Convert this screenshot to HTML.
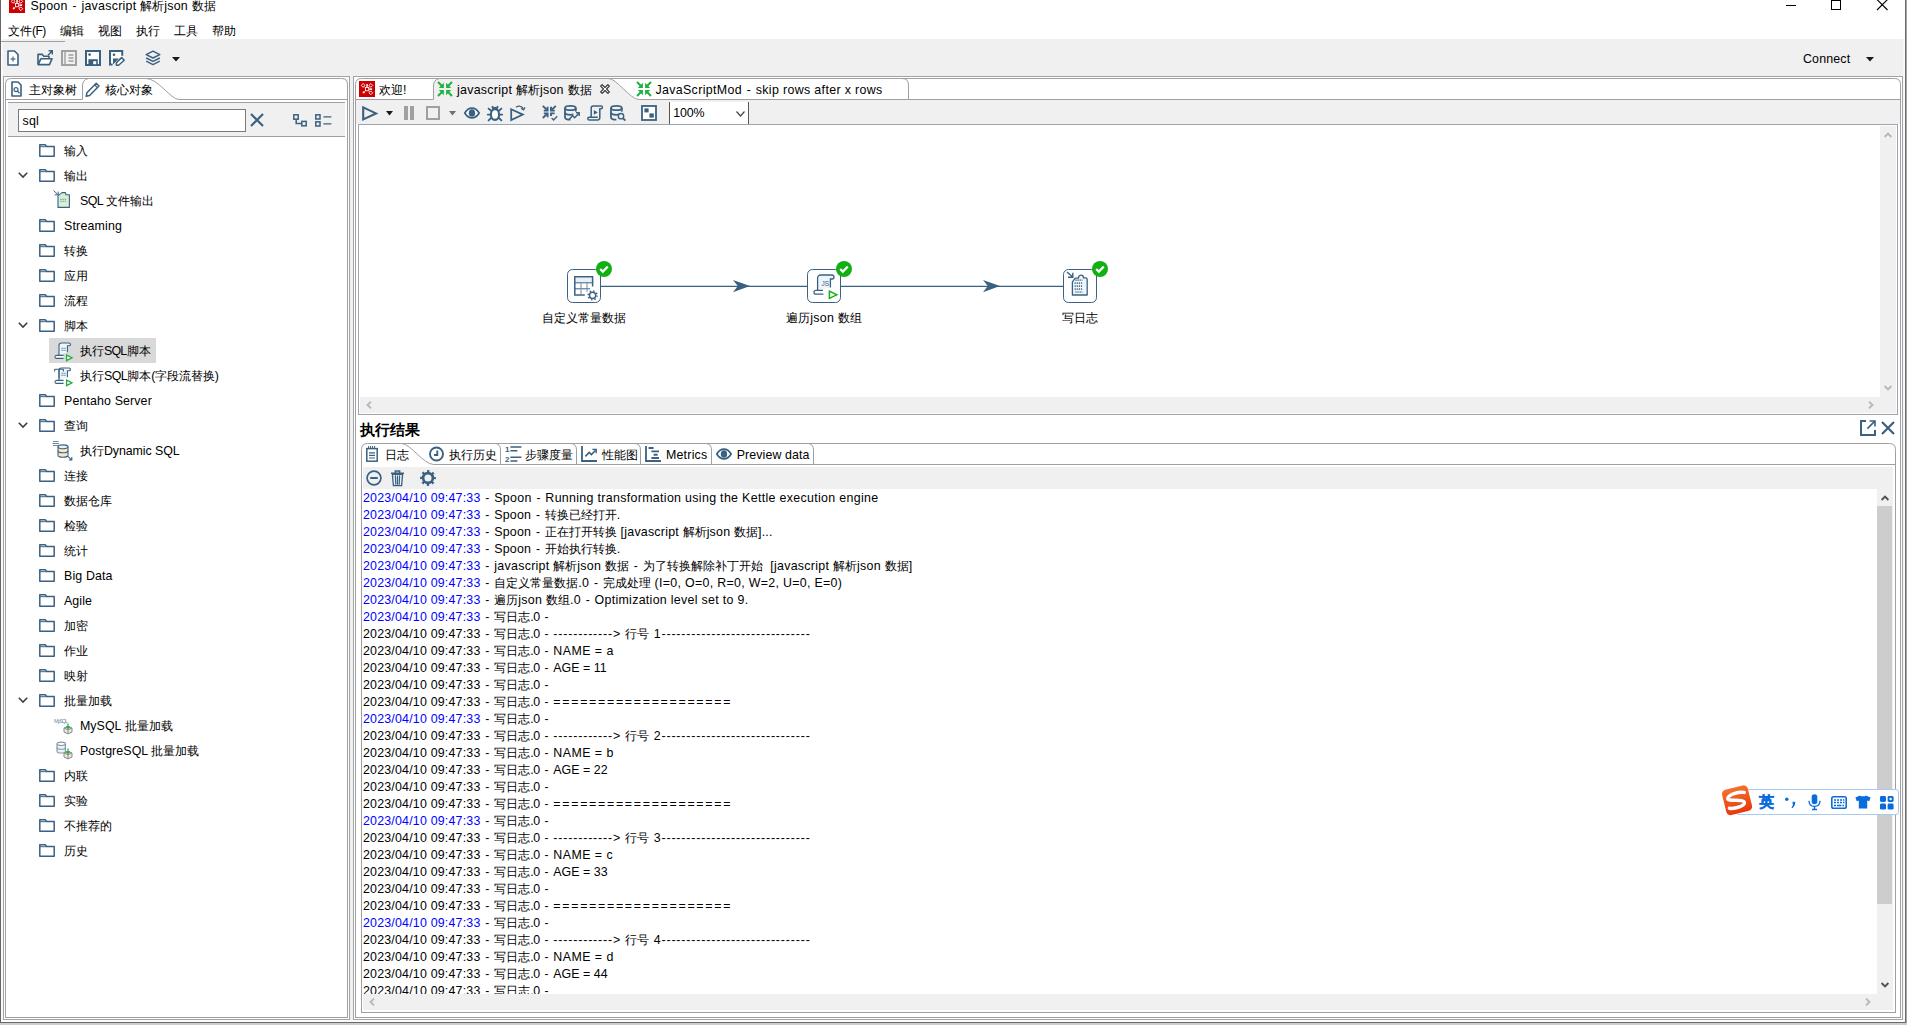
<!DOCTYPE html><html><head><meta charset="utf-8"><title>Spoon</title><style>
html,body{margin:0;padding:0}
body{width:1907px;height:1025px;position:relative;overflow:hidden;background:#f0f0f0;
 font-family:"Liberation Sans",sans-serif;font-size:12px;color:#000}
.a{position:absolute;box-sizing:border-box}
svg.a{overflow:visible}
.t{position:absolute;white-space:pre;font-size:12px}
.t i,.ll i{font-style:normal;font-size:12.4px;letter-spacing:.18px}
.t b,.ll b{font-weight:normal}
.ll{position:absolute;left:363px;white-space:pre;height:17px;line-height:17px;font-size:12px}

.bold b{font-weight:bold}
.t s,.ll s{display:inline-block;width:13.7px;text-align:center;text-decoration:none}
</style></head><body><div class="a" style="left:1px;top:0px;width:1904px;height:39px;background:#fff"></div><div class="a" style="left:1px;top:39px;width:1px;height:983px;background:#fcfcfc"></div><div class="a" style="left:2px;top:39px;width:1px;height:983px;background:#f7f7f7"></div><div class="a" style="left:1903px;top:39px;width:1px;height:983px;background:#f6f6f6"></div><div class="a" style="left:1904px;top:39px;width:1px;height:983px;background:#fcfcfc"></div><div class="a" style="left:1px;top:1020px;width:1904px;height:2px;background:#fbfbfb"></div><div class="a" style="left:0px;top:0px;width:1px;height:1023px;background:#666"></div><div class="a" style="left:1905px;top:0px;width:1px;height:1023px;background:#6a6a6a"></div><div class="a" style="left:1906px;top:0px;width:1px;height:1025px;background:#a8a8a8"></div><div class="a" style="left:0px;top:1022px;width:1906px;height:1px;background:#6a6a6a"></div><div class="a" style="left:0px;top:1023px;width:1907px;height:2px;background:#cdcdcd"></div><svg class="a" style="left:9px;top:-3px" width="16" height="16" viewBox="0 0 16 16" ><rect width="16" height="16" fill="#cc0000"/><g fill="none" stroke="#fff" stroke-opacity=".88" stroke-width="1"><rect x="6.5" y="6.5" width="3.2" height="3.2"/><path d="M4.1 2.5000000000000004l1.9 1.9-1.9 1.9-1.9-1.9zM11.8 2.5000000000000004l1.9 1.9-1.9 1.9-1.9-1.9zM11.8 9.9l1.9 1.9-1.9 1.9-1.9-1.9z"/><path d="M6.5 6.5L5.3 5.6M9.7 6.5l1-.9M9.7 9.7l1 1M6.5 9.7L5.5 10.6" stroke-opacity=".7"/></g><g fill="#fff" fill-opacity=".92"><rect x="7.2" y="3.1" width="1.7" height="2.7"/><rect x="10.3" y="7.3" width="2.8" height="1.7"/><circle cx="4.8" cy="11.3" r="1.15"/></g></svg><div class="t " style="left:30.5px;top:-3px;line-height:18px;height:18px;"><i style="letter-spacing:0.272px;">Spoon</i><s>-</s><i style="letter-spacing:0.272px;">javascript </i><b>解析</b><i style="letter-spacing:0.272px;">json </i><b>数据</b></div><div class="a" style="left:1786px;top:5px;width:10px;height:1px;background:#000"></div><div class="a" style="left:1831px;top:0px;width:10px;height:10px;border:1px solid #000"></div><svg class="a" style="left:1877px;top:0px" width="11" height="11" viewBox="0 0 11 11" ><path d="M0 -.5l10.5 10.5M10.5 -.5L0 10" stroke="#000" stroke-width="1.1" fill="none"/></svg><div class="t " style="left:8px;top:22px;line-height:18px;height:18px;"><b>文件</b><i style="letter-spacing:-0.545px;font-size:12px;">(F)</i></div><div class="t " style="left:60px;top:22px;line-height:18px;height:18px;"><b>编辑</b></div><div class="t " style="left:98px;top:22px;line-height:18px;height:18px;"><b>视图</b></div><div class="t " style="left:136px;top:22px;line-height:18px;height:18px;"><b>执行</b></div><div class="t " style="left:174.3px;top:22px;line-height:18px;height:18px;"><b>工具</b></div><div class="t " style="left:212px;top:22px;line-height:18px;height:18px;"><b>帮助</b></div><div class="a" style="left:1px;top:41px;width:64px;height:1px;background:#a0a0a0"></div><svg class="a" style="left:7px;top:50px" width="12" height="16" viewBox="0 0 12 16" ><path d="M1 1h6.5l3.5 3.5V15H1z" fill="#fff" stroke="#3a6181" stroke-width="1.6" stroke-linejoin="round"/><path d="M6 6.6v4.8M3.6 9h4.8" stroke="#557a97" stroke-width="1.4"/></svg><svg class="a" style="left:37px;top:50px" width="16" height="16" viewBox="0 0 16 16" ><path d="M1 14.6V4.4h4.2l1.6 1.8h5.2v2.4" fill="none" stroke="#3a6181" stroke-width="1.6" stroke-linejoin="round"/><path d="M1.2 14.6l2.6-5.8h11.2l-2.6 5.8z" fill="#fff" stroke="#3a6181" stroke-width="1.6" stroke-linejoin="round"/><path d="M11 5.2L15.2.9M11.6.8h3.7v3.7" fill="none" stroke="#3a6181" stroke-width="1.4"/></svg><svg class="a" style="left:61px;top:50px" width="16" height="16" viewBox="0 0 16 16" ><rect x="1" y="1" width="14" height="14" fill="#f0f0f0" stroke="#a0a0a0" stroke-width="2"/><path d="M4 1v14" stroke="#a0a0a0" stroke-width="1.4"/><path d="M7.5 5h5M7.5 8h5M7.5 11h5" stroke="#a0a0a0" stroke-width="1.5"/></svg><svg class="a" style="left:85px;top:50px" width="16" height="16" viewBox="0 0 16 16" ><rect x="1" y="1" width="14" height="14" fill="#fff" stroke="#3a6181" stroke-width="2"/><rect x="3.4" y="9.2" width="9.4" height="5.8" fill="#3a6181"/><rect x="8.2" y="11.2" width="3" height="3" fill="#fff"/><circle cx="4.6" cy="4.6" r="1.3" fill="#3a6181"/></svg><svg class="a" style="left:109px;top:50px" width="16" height="16" viewBox="0 0 16 16" ><path d="M13.2 5.8V1H1v13.6h2.6" fill="#fff" stroke="#3a6181" stroke-width="2"/><path d="M4 8.6h6L4 14.4z" fill="#3a6181"/><circle cx="5" cy="4.8" r="1.3" fill="#3a6181"/><path d="M12.6 7.6l2.6 2.6-5.6 5H7.4v-2.4z" fill="#fff" stroke="#3a6181" stroke-width="1.5" stroke-linejoin="round"/></svg><svg class="a" style="left:145px;top:50px" width="16" height="16" viewBox="0 0 16 16" ><g fill="none" stroke="#3a6181" stroke-width="1.5" stroke-linejoin="round"><path d="M8 1.2l6.8 3.4L8 8 1.2 4.6z" fill="#f0f0f0"/><path d="M1.2 8L8 11.4 14.8 8"/><path d="M1.2 11.2L8 14.6l6.8-3.4"/></g></svg><svg class="a" style="left:172px;top:57px" width="8" height="5" viewBox="0 0 8 5" ><path d="M0 0h8l-4 4.5z" fill="#1a1a1a"/></svg><div class="t " style="left:1803px;top:51px;line-height:17px;height:17px;"><i style="letter-spacing:0.163px;">Connect</i></div><svg class="a" style="left:1866px;top:57px" width="8" height="5" viewBox="0 0 8 5" ><path d="M0 0h8l-4 4.5z" fill="#1a1a1a"/></svg><div class="a" style="left:3px;top:76px;width:347px;height:944px;border:1px solid #a0a3ab;background:#fff"></div><div class="a" style="left:5px;top:78px;width:7px;height:7px;background:#f0f0f0"></div><div class="a" style="left:341px;top:78px;width:7px;height:7px;background:#f0f0f0"></div><svg class="a" style="left:5px;top:78px" width="343" height="22" viewBox="0 0 343 22" ><path d="M.5 22V6.5Q.5 .5 6.5 .5H336.5Q342.5 .5 342.5 6.5V22z" fill="#fff" stroke="none"/><path d="M.5 22V6.5Q.5 .5 6.5 .5H336.5Q342.5 .5 342.5 6.5V22" fill="none" stroke="#a0a0a0"/><path d="M.5 21.5H77.5V8Q77.5 1.5 83.5 .5 M141 .5C153.2 .5 165.7 21.5 174 21.5H342.5" fill="none" stroke="#a0a0a0"/></svg><div class="a" style="left:5px;top:100px;width:343px;height:918px;border:1px solid #a0a0a0;border-top:0"></div><svg class="a" style="left:11px;top:81px" width="12" height="16" viewBox="0 0 12 16" ><path d="M1 1h6l3 3V15H1z" fill="#fff" stroke="#3a6181" stroke-width="1.6" stroke-linejoin="round"/><circle cx="5" cy="8.6" r="2" fill="none" stroke="#3a6181" stroke-width="1.2"/><path d="M6.5 10.2l2 2" stroke="#3a6181" stroke-width="1.3"/></svg><div class="t " style="left:28.5px;top:81px;line-height:18px;height:18px;"><b>主对象树</b></div><svg class="a" style="left:84.8px;top:82px" width="15" height="15" viewBox="0 0 15 15" ><path d="M11.2 1.2l2.8 2.8-9.4 9.6-3.4.7.7-3.5z" fill="#fff" stroke="#3a6181" stroke-width="1.5" stroke-linejoin="round"/><path d="M9.6 2.9l2.8 2.8" stroke="#3a6181" stroke-width="1.2"/></svg><div class="t " style="left:105px;top:81px;line-height:18px;height:18px;"><b>核心对象</b></div><div class="a" style="left:8px;top:102px;width:337px;height:35px;background:#f0f0f0;border-top:1px solid #a0a0a0;border-bottom:1px solid #a0a0a0"></div><div class="a" style="left:18px;top:109px;width:228px;height:23px;background:#fff;border:1px solid #7a7a7a"></div><div class="t " style="left:22.5px;top:113px;line-height:17px;height:17px;"><i>sql</i></div><svg class="a" style="left:250px;top:113px" width="14" height="14" viewBox="0 0 14 14" ><path d="M1 1l12 12M13 1L1 13" stroke="#3a6181" stroke-width="2.2"/></svg><svg class="a" style="left:293px;top:114px" width="14" height="13" viewBox="0 0 14 13" ><g fill="#f0f0f0" stroke="#3a6181" stroke-width="1.5"><path d="M3.2 5v4.6h5" fill="none"/><rect x=".8" y=".8" width="4.4" height="4.4"/><rect x="8.8" y="7.4" width="4.4" height="4.4"/></g></svg><svg class="a" style="left:315px;top:114px" width="17" height="13" viewBox="0 0 17 13" ><g fill="#f0f0f0" stroke="#3a6181" stroke-width="1.5"><rect x=".8" y=".8" width="4.2" height="4.2"/><rect x=".8" y="7.8" width="4.2" height="4.2"/><path d="M8.4 2.9h8M8.4 9.9h8" stroke-width="1.3"/></g></svg><svg class="a" style="left:39px;top:144px" width="16" height="13" viewBox="0 0 16 13" ><path d="M.8 12.2V.8h5.4l1.6 1.8h7.4v9.6z" fill="#fff" stroke="#3a6181" stroke-width="1.5" stroke-linejoin="round"/><path d="M1 2.7h6.6" stroke="#3a6181" stroke-width="1"/></svg><div class="t " style="left:64px;top:142px;line-height:19px;height:19px;"><b>输入</b></div><svg class="a" style="left:17.5px;top:172px" width="10" height="6" viewBox="0 0 10 6" ><path d="M.8 .8L5 5 9.2 .8" fill="none" stroke="#404040" stroke-width="1.6"/></svg><svg class="a" style="left:39px;top:169px" width="16" height="13" viewBox="0 0 16 13" ><path d="M.8 12.2V.8h5.4l1.6 1.8h7.4v9.6z" fill="#fff" stroke="#3a6181" stroke-width="1.5" stroke-linejoin="round"/><path d="M1 2.7h6.6" stroke="#3a6181" stroke-width="1"/></svg><div class="t " style="left:64px;top:167px;line-height:19px;height:19px;"><b>输出</b></div><svg class="a" style="left:53px;top:190px" width="17" height="18" viewBox="0 0 17 18" ><path d="M.6 .6l4.2 3.8M1.6 4.8h3.6V1.6" fill="none" stroke="#3a6181" stroke-width="1"/><path d="M5 17.4V5.6L9 2.6h3.4l.6 2.2h3.4V17.4z" fill="#d8efd4" stroke="#3a6181" stroke-width="1.1" stroke-linejoin="round"/><path d="M7.2 9.4h6.4M7.2 11.4h6.4" stroke="#8fa9b8" stroke-width="1.1" stroke-dasharray="1.5 .7"/></svg><div class="t " style="left:80px;top:192px;line-height:19px;height:19px;"><i style="letter-spacing:-0.57px;">SQL </i><b>文件输出</b></div><svg class="a" style="left:39px;top:219px" width="16" height="13" viewBox="0 0 16 13" ><path d="M.8 12.2V.8h5.4l1.6 1.8h7.4v9.6z" fill="#fff" stroke="#3a6181" stroke-width="1.5" stroke-linejoin="round"/><path d="M1 2.7h6.6" stroke="#3a6181" stroke-width="1"/></svg><div class="t " style="left:64px;top:217px;line-height:19px;height:19px;"><i style="letter-spacing:0.192px;">Streaming</i></div><svg class="a" style="left:39px;top:244px" width="16" height="13" viewBox="0 0 16 13" ><path d="M.8 12.2V.8h5.4l1.6 1.8h7.4v9.6z" fill="#fff" stroke="#3a6181" stroke-width="1.5" stroke-linejoin="round"/><path d="M1 2.7h6.6" stroke="#3a6181" stroke-width="1"/></svg><div class="t " style="left:64px;top:242px;line-height:19px;height:19px;"><b>转换</b></div><svg class="a" style="left:39px;top:269px" width="16" height="13" viewBox="0 0 16 13" ><path d="M.8 12.2V.8h5.4l1.6 1.8h7.4v9.6z" fill="#fff" stroke="#3a6181" stroke-width="1.5" stroke-linejoin="round"/><path d="M1 2.7h6.6" stroke="#3a6181" stroke-width="1"/></svg><div class="t " style="left:64px;top:267px;line-height:19px;height:19px;"><b>应用</b></div><svg class="a" style="left:39px;top:294px" width="16" height="13" viewBox="0 0 16 13" ><path d="M.8 12.2V.8h5.4l1.6 1.8h7.4v9.6z" fill="#fff" stroke="#3a6181" stroke-width="1.5" stroke-linejoin="round"/><path d="M1 2.7h6.6" stroke="#3a6181" stroke-width="1"/></svg><div class="t " style="left:64px;top:292px;line-height:19px;height:19px;"><b>流程</b></div><svg class="a" style="left:17.5px;top:322px" width="10" height="6" viewBox="0 0 10 6" ><path d="M.8 .8L5 5 9.2 .8" fill="none" stroke="#404040" stroke-width="1.6"/></svg><svg class="a" style="left:39px;top:319px" width="16" height="13" viewBox="0 0 16 13" ><path d="M.8 12.2V.8h5.4l1.6 1.8h7.4v9.6z" fill="#fff" stroke="#3a6181" stroke-width="1.5" stroke-linejoin="round"/><path d="M1 2.7h6.6" stroke="#3a6181" stroke-width="1"/></svg><div class="t " style="left:64px;top:317px;line-height:19px;height:19px;"><b>脚本</b></div><div class="a" style="left:49px;top:338px;width:107px;height:25px;background:#d9d9d9"></div><svg class="a" style="left:54px;top:342px" width="19" height="20" viewBox="0 0 19 20" ><path d="M5 13.4V3.4C5 2 6 1 7.4 1H15c.9 0 1.5.6 1.5 1.4S15.9 3.8 15 3.8h-1.6v6.4" fill="#eef5fb" stroke="#3a6181" stroke-width="1.1"/><path d="M9.6 13.4H2.6c-.9 0-1.6.6-1.6 1.5s.7 1.5 1.6 1.5h7" fill="#fff" stroke="#3a6181" stroke-width="1.1"/><path d="M7.4 6.4h4.6M7.4 8.4h4.6" stroke="#7f9bb0" stroke-width="1.2" stroke-dasharray="1.4 .6"/><path d="M12.6 13l5.4 2.8-5.4 2.8z" fill="#fff" stroke="#1fae3f" stroke-width="1.3"/></svg><div class="t " style="left:80px;top:342px;line-height:19px;height:19px;"><b>执行</b><i style="letter-spacing:-0.768px;">SQL</i><b>脚本</b></div><svg class="a" style="left:54px;top:367px" width="19" height="20" viewBox="0 0 19 20" ><path d="M5 13.4V3.4C5 2 6 1 7.4 1H15c.9 0 1.5.6 1.5 1.4S15.9 3.8 15 3.8h-1.6v6.4" fill="#eef5fb" stroke="#3a6181" stroke-width="1.1"/><path d="M9.6 13.4H2.6c-.9 0-1.6.6-1.6 1.5s.7 1.5 1.6 1.5h7" fill="#fff" stroke="#3a6181" stroke-width="1.1"/><path d="M7.4 6.4h4.6M7.4 8.4h4.6" stroke="#7f9bb0" stroke-width="1.2" stroke-dasharray="1.4 .6"/><path d="M12.6 13l5.4 2.8-5.4 2.8z" fill="#fff" stroke="#1fae3f" stroke-width="1.3"/><path d="M.6 2.2h8.8M.6 2.2v2.4M9.4 2.2v2.4M5 2.2v9" fill="none" stroke="#3a6181" stroke-width="1.1"/></svg><div class="t " style="left:80px;top:367px;line-height:19px;height:19px;"><b>执行</b><i style="letter-spacing:-0.534px;">SQL</i><b>脚本</b><i style="letter-spacing:-0.534px;">(</i><b>字段流替换</b><i style="letter-spacing:-0.534px;">)</i></div><svg class="a" style="left:39px;top:394px" width="16" height="13" viewBox="0 0 16 13" ><path d="M.8 12.2V.8h5.4l1.6 1.8h7.4v9.6z" fill="#fff" stroke="#3a6181" stroke-width="1.5" stroke-linejoin="round"/><path d="M1 2.7h6.6" stroke="#3a6181" stroke-width="1"/></svg><div class="t " style="left:64px;top:392px;line-height:19px;height:19px;"><i style="letter-spacing:0.128px;">Pentaho Server</i></div><svg class="a" style="left:17.5px;top:422px" width="10" height="6" viewBox="0 0 10 6" ><path d="M.8 .8L5 5 9.2 .8" fill="none" stroke="#404040" stroke-width="1.6"/></svg><svg class="a" style="left:39px;top:419px" width="16" height="13" viewBox="0 0 16 13" ><path d="M.8 12.2V.8h5.4l1.6 1.8h7.4v9.6z" fill="#fff" stroke="#3a6181" stroke-width="1.5" stroke-linejoin="round"/><path d="M1 2.7h6.6" stroke="#3a6181" stroke-width="1"/></svg><div class="t " style="left:64px;top:417px;line-height:19px;height:19px;"><b>查询</b></div><svg class="a" style="left:52px;top:440px" width="21" height="21" viewBox="0 0 21 21" ><path d="M.5 3.5h6.5M1 1.5h5.5M1 5.5h6" stroke="#6d8ba3" stroke-width="1.1"/><g stroke="#3a6181" stroke-width="1.1"><path d="M6 6.8v8.4c0 1.1 2.2 2 5 2s5-.9 5-2V6.8" fill="#fbe6c8"/><ellipse cx="11" cy="6.8" rx="5" ry="1.9" fill="#eef5fb"/><path d="M6 10.8c0 1.1 2.2 2 5 2s5-.9 5-2" fill="none"/></g><path d="M15.6 16.2l4 3.6M16.8 20h3V17" fill="none" stroke="#3a6181" stroke-width="1.1"/></svg><div class="t " style="left:80px;top:442px;line-height:19px;height:19px;"><b>执行</b><i style="letter-spacing:-0.086px;">Dynamic SQL</i></div><svg class="a" style="left:39px;top:469px" width="16" height="13" viewBox="0 0 16 13" ><path d="M.8 12.2V.8h5.4l1.6 1.8h7.4v9.6z" fill="#fff" stroke="#3a6181" stroke-width="1.5" stroke-linejoin="round"/><path d="M1 2.7h6.6" stroke="#3a6181" stroke-width="1"/></svg><div class="t " style="left:64px;top:467px;line-height:19px;height:19px;"><b>连接</b></div><svg class="a" style="left:39px;top:494px" width="16" height="13" viewBox="0 0 16 13" ><path d="M.8 12.2V.8h5.4l1.6 1.8h7.4v9.6z" fill="#fff" stroke="#3a6181" stroke-width="1.5" stroke-linejoin="round"/><path d="M1 2.7h6.6" stroke="#3a6181" stroke-width="1"/></svg><div class="t " style="left:64px;top:492px;line-height:19px;height:19px;"><b>数据仓库</b></div><svg class="a" style="left:39px;top:519px" width="16" height="13" viewBox="0 0 16 13" ><path d="M.8 12.2V.8h5.4l1.6 1.8h7.4v9.6z" fill="#fff" stroke="#3a6181" stroke-width="1.5" stroke-linejoin="round"/><path d="M1 2.7h6.6" stroke="#3a6181" stroke-width="1"/></svg><div class="t " style="left:64px;top:517px;line-height:19px;height:19px;"><b>检验</b></div><svg class="a" style="left:39px;top:544px" width="16" height="13" viewBox="0 0 16 13" ><path d="M.8 12.2V.8h5.4l1.6 1.8h7.4v9.6z" fill="#fff" stroke="#3a6181" stroke-width="1.5" stroke-linejoin="round"/><path d="M1 2.7h6.6" stroke="#3a6181" stroke-width="1"/></svg><div class="t " style="left:64px;top:542px;line-height:19px;height:19px;"><b>统计</b></div><svg class="a" style="left:39px;top:569px" width="16" height="13" viewBox="0 0 16 13" ><path d="M.8 12.2V.8h5.4l1.6 1.8h7.4v9.6z" fill="#fff" stroke="#3a6181" stroke-width="1.5" stroke-linejoin="round"/><path d="M1 2.7h6.6" stroke="#3a6181" stroke-width="1"/></svg><div class="t " style="left:64px;top:567px;line-height:19px;height:19px;"><i style="letter-spacing:0.134px;">Big Data</i></div><svg class="a" style="left:39px;top:594px" width="16" height="13" viewBox="0 0 16 13" ><path d="M.8 12.2V.8h5.4l1.6 1.8h7.4v9.6z" fill="#fff" stroke="#3a6181" stroke-width="1.5" stroke-linejoin="round"/><path d="M1 2.7h6.6" stroke="#3a6181" stroke-width="1"/></svg><div class="t " style="left:64px;top:592px;line-height:19px;height:19px;"><i style="letter-spacing:0.109px;">Agile</i></div><svg class="a" style="left:39px;top:619px" width="16" height="13" viewBox="0 0 16 13" ><path d="M.8 12.2V.8h5.4l1.6 1.8h7.4v9.6z" fill="#fff" stroke="#3a6181" stroke-width="1.5" stroke-linejoin="round"/><path d="M1 2.7h6.6" stroke="#3a6181" stroke-width="1"/></svg><div class="t " style="left:64px;top:617px;line-height:19px;height:19px;"><b>加密</b></div><svg class="a" style="left:39px;top:644px" width="16" height="13" viewBox="0 0 16 13" ><path d="M.8 12.2V.8h5.4l1.6 1.8h7.4v9.6z" fill="#fff" stroke="#3a6181" stroke-width="1.5" stroke-linejoin="round"/><path d="M1 2.7h6.6" stroke="#3a6181" stroke-width="1"/></svg><div class="t " style="left:64px;top:642px;line-height:19px;height:19px;"><b>作业</b></div><svg class="a" style="left:39px;top:669px" width="16" height="13" viewBox="0 0 16 13" ><path d="M.8 12.2V.8h5.4l1.6 1.8h7.4v9.6z" fill="#fff" stroke="#3a6181" stroke-width="1.5" stroke-linejoin="round"/><path d="M1 2.7h6.6" stroke="#3a6181" stroke-width="1"/></svg><div class="t " style="left:64px;top:667px;line-height:19px;height:19px;"><b>映射</b></div><svg class="a" style="left:17.5px;top:697px" width="10" height="6" viewBox="0 0 10 6" ><path d="M.8 .8L5 5 9.2 .8" fill="none" stroke="#404040" stroke-width="1.6"/></svg><svg class="a" style="left:39px;top:694px" width="16" height="13" viewBox="0 0 16 13" ><path d="M.8 12.2V.8h5.4l1.6 1.8h7.4v9.6z" fill="#fff" stroke="#3a6181" stroke-width="1.5" stroke-linejoin="round"/><path d="M1 2.7h6.6" stroke="#3a6181" stroke-width="1"/></svg><div class="t " style="left:64px;top:692px;line-height:19px;height:19px;"><b>批量加载</b></div><svg class="a" style="left:54px;top:717px" width="20" height="19" viewBox="0 0 20 19" ><text x="0" y="5.5" font-family="Liberation Sans" font-size="5.5" fill="#6d8ba3" textLength="14">MySQL</text><path d="M10 11l4-1.7 4 1.7v4l-4 1.9-4-1.9z" fill="#fbe6c8" stroke="#7d8f9c" stroke-width="1"/><path d="M10 11l4 1.7 4-1.7M14 12.7v4" fill="none" stroke="#7d8f9c" stroke-width="1"/><path d="M14 6.5v4.6M12.2 9.5l1.8 1.8 1.8-1.8" fill="none" stroke="#1fae3f" stroke-width="1.2"/></svg><div class="t " style="left:80px;top:717px;line-height:19px;height:19px;"><i style="letter-spacing:0.034px;">MySQL </i><b>批量加载</b></div><svg class="a" style="left:56px;top:741px" width="18" height="20" viewBox="0 0 18 20" ><g stroke="#8297a8" stroke-width="1.1"><path d="M1 2.8v7.4c0 1 1.9 1.8 4.2 1.8s4.2-.8 4.2-1.8V2.8" fill="#eef2f6"/><ellipse cx="5.2" cy="2.8" rx="4.2" ry="1.7" fill="#fff"/><path d="M1 6.4c0 1 1.9 1.8 4.2 1.8s4.2-.8 4.2-1.8" fill="none"/></g><path d="M8 12l4-1.7 4 1.7v4l-4 1.9-4-1.9z" fill="#fbe6c8" stroke="#7d8f9c" stroke-width="1"/><path d="M8 12l4 1.7 4-1.7M12 13.7v4" fill="none" stroke="#7d8f9c" stroke-width="1"/><path d="M12 7.5v4.6M10.2 10.5l1.8 1.8 1.8-1.8" fill="none" stroke="#1fae3f" stroke-width="1.2"/></svg><div class="t " style="left:80px;top:742px;line-height:19px;height:19px;"><i style="letter-spacing:0.083px;">PostgreSQL </i><b>批量加载</b></div><svg class="a" style="left:39px;top:769px" width="16" height="13" viewBox="0 0 16 13" ><path d="M.8 12.2V.8h5.4l1.6 1.8h7.4v9.6z" fill="#fff" stroke="#3a6181" stroke-width="1.5" stroke-linejoin="round"/><path d="M1 2.7h6.6" stroke="#3a6181" stroke-width="1"/></svg><div class="t " style="left:64px;top:767px;line-height:19px;height:19px;"><b>内联</b></div><svg class="a" style="left:39px;top:794px" width="16" height="13" viewBox="0 0 16 13" ><path d="M.8 12.2V.8h5.4l1.6 1.8h7.4v9.6z" fill="#fff" stroke="#3a6181" stroke-width="1.5" stroke-linejoin="round"/><path d="M1 2.7h6.6" stroke="#3a6181" stroke-width="1"/></svg><div class="t " style="left:64px;top:792px;line-height:19px;height:19px;"><b>实验</b></div><svg class="a" style="left:39px;top:819px" width="16" height="13" viewBox="0 0 16 13" ><path d="M.8 12.2V.8h5.4l1.6 1.8h7.4v9.6z" fill="#fff" stroke="#3a6181" stroke-width="1.5" stroke-linejoin="round"/><path d="M1 2.7h6.6" stroke="#3a6181" stroke-width="1"/></svg><div class="t " style="left:64px;top:817px;line-height:19px;height:19px;"><b>不推荐的</b></div><svg class="a" style="left:39px;top:844px" width="16" height="13" viewBox="0 0 16 13" ><path d="M.8 12.2V.8h5.4l1.6 1.8h7.4v9.6z" fill="#fff" stroke="#3a6181" stroke-width="1.5" stroke-linejoin="round"/><path d="M1 2.7h6.6" stroke="#3a6181" stroke-width="1"/></svg><div class="t " style="left:64px;top:842px;line-height:19px;height:19px;"><b>历史</b></div><div class="a" style="left:353px;top:76px;width:1550px;height:944px;border:1px solid #a0a3ab;background:#fff"></div><div class="a" style="left:355px;top:78px;width:7px;height:7px;background:#fff"></div><div class="a" style="left:1894px;top:78px;width:7px;height:7px;background:#fff"></div><svg class="a" style="left:355px;top:78px" width="1546" height="22" viewBox="0 0 1546 22" ><path d="M.5 22V6.5Q.5 .5 6.5 .5H1539.5Q1545.5 .5 1545.5 6.5V22z" fill="#fff" stroke="none"/><path d="M78.5 22V8Q78.5 1.5 84.5 .5H253.4C261.9 .5 274.8 21.5 284.2 21.5V22z" fill="#f0f0f0"/><path d="M.5 22V6.5Q.5 .5 6.5 .5H1539.5Q1545.5 .5 1545.5 6.5V22" fill="none" stroke="#a0a0a0"/><path d="M.5 21.5H78.5V8Q78.5 1.5 84.5 .5 M253.4 .5C261.9 .5 274.8 21.5 284.2 21.5H1545.5 M553.5 21.5V7Q553.5 .5 547 .5" fill="none" stroke="#a0a0a0"/></svg><div class="a" style="left:355px;top:100px;width:1546px;height:918px;border:1px solid #a0a0a0;border-top:0"></div><svg class="a" style="left:359px;top:81px" width="16" height="16" viewBox="0 0 16 16" ><rect width="16" height="16" fill="#cc0000"/><g fill="none" stroke="#fff" stroke-opacity=".88" stroke-width="1"><rect x="6.5" y="6.5" width="3.2" height="3.2"/><path d="M4.1 2.5000000000000004l1.9 1.9-1.9 1.9-1.9-1.9zM11.8 2.5000000000000004l1.9 1.9-1.9 1.9-1.9-1.9zM11.8 9.9l1.9 1.9-1.9 1.9-1.9-1.9z"/><path d="M6.5 6.5L5.3 5.6M9.7 6.5l1-.9M9.7 9.7l1 1M6.5 9.7L5.5 10.6" stroke-opacity=".7"/></g><g fill="#fff" fill-opacity=".92"><rect x="7.2" y="3.1" width="1.7" height="2.7"/><rect x="10.3" y="7.3" width="2.8" height="1.7"/><circle cx="4.8" cy="11.3" r="1.15"/></g></svg><div class="t " style="left:379px;top:81px;line-height:18px;height:18px;"><b>欢迎</b><i>!</i></div><svg class="a" style="left:437px;top:81px" width="16" height="16" viewBox="0 0 16 16" ><g fill="#1db443" stroke="#1db443" stroke-width="2.1"><path d="M1 1l4.5 4.5M15 1l-4.5 4.5M1 15l4.5-4.5M15 15l-4.5-4.5" fill="none"/><path d="M6.9 1.8V6.9H1.8zM9.1 1.8V6.9H14.2zM6.9 14.2V9.1H1.8zM9.1 14.2V9.1H14.2z" stroke="none"/></g></svg><div class="t " style="left:457px;top:81px;line-height:18px;height:18px;"><i style="letter-spacing:0.284px;">javascript </i><b>解析</b><i style="letter-spacing:0.284px;">json </i><b>数据</b></div><svg class="a" style="left:600px;top:84px" width="10" height="10" viewBox="0 0 10 10" ><path d="M.6 2.1L2.1 .6 5 3.5 7.9 .6 9.4 2.1 6.5 5 9.4 7.9 7.9 9.4 5 6.5 2.1 9.4 .6 7.9 3.5 5z" fill="#fff" stroke="#333" stroke-width="1.1" stroke-linejoin="round"/></svg><svg class="a" style="left:635.5px;top:81px" width="16" height="16" viewBox="0 0 16 16" ><g fill="#1db443" stroke="#1db443" stroke-width="2.1"><path d="M1 1l4.5 4.5M15 1l-4.5 4.5M1 15l4.5-4.5M15 15l-4.5-4.5" fill="none"/><path d="M6.9 1.8V6.9H1.8zM9.1 1.8V6.9H14.2zM6.9 14.2V9.1H1.8zM9.1 14.2V9.1H14.2z" stroke="none"/></g></svg><div class="t " style="left:655.4px;top:81px;line-height:18px;height:18px;"><i style="letter-spacing:0.358px;">JavaScriptMod</i><s>-</s><i style="letter-spacing:0.358px;">skip rows after x rows</i></div><div class="a" style="left:356px;top:100px;width:1544px;height:24px;background:#f0f0f0"></div><svg class="a" style="left:362px;top:106px" width="16" height="15" viewBox="0 0 16 15" ><path d="M1.2 1.4l12.8 6-12.8 6z" fill="none" stroke="#3a6181" stroke-width="2.1" stroke-linejoin="miter"/></svg><svg class="a" style="left:386px;top:111px" width="7" height="5" viewBox="0 0 7 5" ><path d="M0 0h7l-3.5 4.5z" fill="#1a1a1a"/></svg><svg class="a" style="left:404px;top:106px" width="10" height="14" viewBox="0 0 10 14" ><rect x="0" y="0" width="4" height="14" fill="#a0a0a0"/><rect x="6" y="0" width="4" height="14" fill="#a0a0a0"/></svg><svg class="a" style="left:426px;top:106px" width="14" height="14" viewBox="0 0 14 14" ><rect x="1" y="1" width="12" height="12" fill="none" stroke="#a0a0a0" stroke-width="2"/></svg><svg class="a" style="left:449px;top:111px" width="7" height="5" viewBox="0 0 7 5" ><path d="M0 0h7l-3.5 4.5z" fill="#707070"/></svg><svg class="a" style="left:463.5px;top:107px" width="16" height="12" viewBox="0 0 16.5 12" ><path d="M.8 6C3 2.4 5.6 1 8.2 1s5.2 1.4 7.4 5c-2.2 3.6-4.8 5-7.4 5S3 9.6.8 6z" fill="#fff" stroke="#3a6181" stroke-width="1.8"/><ellipse cx="8.2" cy="6" rx="3.3" ry="3.9" fill="#3a6181"/></svg><svg class="a" style="left:487px;top:105.5px" width="16" height="15" viewBox="0 0 16 15" ><g fill="none" stroke="#3a6181" stroke-width="1.9" stroke-linecap="round"><path d="M4.4 5L1.6 2.6M11.6 5l2.8-2.4M3.6 8.6H.8M12.4 8.6h2.8M4.2 11.8l-2.6 2.6M11.8 11.8l2.6 2.6M6.2 2.2L5.4.8M9.8 2.2l.8-1.4"/><ellipse cx="8" cy="8.6" rx="4.1" ry="5.3" fill="#fff" stroke-width="2.1"/><path d="M5.6 3.8C6 2.2 7 1.8 8 1.8s2 .4 2.4 2" fill="#3a6181"/></g></svg><svg class="a" style="left:510px;top:105px" width="16" height="16" viewBox="0 0 16 16" ><path d="M1.2 4.2l11.6 5.4L1.2 15z" fill="none" stroke="#3a6181" stroke-width="1.8"/><path d="M6 2.2C8.6.6 12 .8 13.4 3.8" fill="none" stroke="#3a6181" stroke-width="1.3"/><path d="M11.2 3.4l2.4 1.4 1.4-2.6" fill="none" stroke="#3a6181" stroke-width="1.3"/></svg><svg class="a" style="left:541.5px;top:105px" width="16" height="16" viewBox="0 0 16 16" ><g fill="none" stroke="#3a6181" stroke-width="1.8"><path d="M.8.8L5 5M13.8.800L9.6 5M.8 13l4.2-4.2"/><path d="M5.6 1.8v3.8H1.8M9 1.8v3.8h3.8M5.6 12.2V8.4H1.8M9 11V8.4h3.6" stroke-width="1.9"/><path d="M9.6 13l2 2 3.6-3.8" stroke-width="1.3"/></g></svg><svg class="a" style="left:564px;top:105px" width="16" height="16" viewBox="0 0 16 16" ><g fill="none" stroke="#3a6181" stroke-width="1.8"><ellipse cx="6.4" cy="3" rx="5.4" ry="2.2" fill="#f0f0f0"/><path d="M1 3v9.4c0 1.2 2.4 2.2 5.4 2.2"/><path d="M11.8 3v3.6"/><path d="M1 7.6c0 1.2 2.4 2.2 5.4 2.2 1.2 0 2.2-.2 3-.4" /><path d="M5 14.6l3.6-3.8 2 2 4.4-4.6" stroke-width="1.5"/><path d="M12 7.8h3.2V11" stroke-width="1.4"/></g></svg><svg class="a" style="left:587px;top:105px" width="16" height="16" viewBox="0 0 16 16" ><path d="M4.2 12.2V3c0-1.2.8-2 2-2h8c.8 0 1.2.6 1.2 1.4S15 3.8 14.2 3.8h-1.4V12.6c0 1.4-.8 2.4-2 2.4H2c-.8 0-1.2-.6-1.2-1.4s.4-1.4 1.2-1.4h8.8" fill="#f0f0f0" stroke="#3a6181" stroke-width="1.5" stroke-linejoin="round"/><path d="M6.8 5l4 2.4-4 2.4z" fill="#3a6181"/></svg><svg class="a" style="left:610px;top:105px" width="16" height="16" viewBox="0 0 16 16" ><g fill="none" stroke="#3a6181" stroke-width="1.8"><ellipse cx="6.4" cy="3" rx="5.4" ry="2.2" fill="#f0f0f0"/><path d="M1 3v9.4c0 1.2 2.4 2.2 5.4 2.2"/><path d="M11.8 3v3.6"/><path d="M1 7.6c0 1.2 2.4 2.2 5.4 2.2 1.2 0 2.2-.2 3-.4" /><circle cx="11" cy="11.2" r="2.7" fill="#f0f0f0" stroke-width="1.4"/><path d="M13 13.2l2.4 2.4" stroke-width="1.7"/></g></svg><svg class="a" style="left:641px;top:105px" width="16" height="16" viewBox="0 0 16 16" ><rect x="1" y="1" width="14" height="14" fill="#fff" stroke="#3a6181" stroke-width="1.8"/><rect x="3.4" y="3.4" width="4.2" height="4" fill="#3a6181"/><rect x="8.4" y="8.4" width="4.4" height="4.2" fill="#3a6181"/></svg><div class="a" style="left:669px;top:102px;width:80px;height:22px;background:#fff;border-left:1px solid #555;border-right:1px solid #555"></div><div class="t " style="left:673.3px;top:105px;line-height:17px;height:17px;"><i style="letter-spacing:-0.15px;">100%</i></div><svg class="a" style="left:735.5px;top:111px" width="9" height="6" viewBox="0 0 9 6" ><path d="M.5 .5l4 4.5 4-4.5" fill="none" stroke="#444" stroke-width="1.2"/></svg><div class="a" style="left:358px;top:124px;width:1540px;height:291px;border:1px solid #a0a3ab;background:#fff"></div><div class="a" style="left:1880px;top:126px;width:16px;height:287px;background:#f0f0f0"></div><div class="a" style="left:360px;top:397px;width:1536px;height:16px;background:#f0f0f0"></div><svg class="a" style="left:1884px;top:132px" width="8" height="6" viewBox="0 0 8 6" ><path d="M.6 5L4 1.5 7.4 5" fill="none" stroke="#b6b6b6" stroke-width="1.8"/></svg><svg class="a" style="left:1884px;top:385px" width="8" height="6" viewBox="0 0 8 6" ><path d="M.6 1L4 4.5 7.4 1" fill="none" stroke="#b6b6b6" stroke-width="1.8"/></svg><svg class="a" style="left:365.5px;top:400.5px" width="6" height="8" viewBox="0 0 6 8" ><path d="M5 .6L1.5 4 5 7.4" fill="none" stroke="#b6b6b6" stroke-width="1.8"/></svg><svg class="a" style="left:1868px;top:400.5px" width="6" height="8" viewBox="0 0 6 8" ><path d="M1 .6L4.5 4 1 7.4" fill="none" stroke="#b6b6b6" stroke-width="1.8"/></svg><svg class="a" style="left:601px;top:284px" width="462" height="5" viewBox="0 0 462 5" ><path d="M0 2.45H206M240 2.45H462" stroke="#3a6181" stroke-width="1.25"/></svg><svg class="a" style="left:732.5px;top:280.4px" width="17" height="13" viewBox="0 0 17 13" ><path d="M0 0l17 6.1L0 12.2l4.8-6.1z" fill="#3a6181"/></svg><svg class="a" style="left:982.5px;top:280.4px" width="17" height="13" viewBox="0 0 17 13" ><path d="M0 0l17 6.1L0 12.2l4.8-6.1z" fill="#3a6181"/></svg><div class="a" style="left:567px;top:269px;width:34px;height:34px;border:1.3px solid #3a6181;border-radius:5.5px;background:#fff"></div><svg class="a" style="left:574px;top:276px" width="24" height="25" viewBox="0 0 24 25" ><rect x=".8" y=".8" width="18.4" height="18.4" fill="#fff"/><rect x="1.5" y="1.5" width="17" height="5" fill="#e8f1f9"/><path d="M18.6 10.5V.8H.8v18.2h10" fill="none" stroke="#3a6181" stroke-width="1.5"/><path d="M1 6.8h17.6M1 12.8h15" stroke="#3a6181" stroke-width="1"/><path d="M7 6.8v12M13 6.8v9" stroke="#6f8ca5" stroke-width="1"/><circle cx="18.6" cy="19.4" r="3.1" fill="#fff" stroke="#3a6181" stroke-width="1.4"/><circle cx="18.6" cy="19.4" r="4.5" fill="none" stroke="#3a6181" stroke-width="1.4" stroke-dasharray="1.5 2.03"/></svg><svg class="a" style="left:596px;top:261px" width="16" height="16" viewBox="0 0 16 16" ><circle cx="8" cy="8" r="8" fill="#13b013"/><path d="M4.2 8l2.6 2.6 5-5" fill="none" stroke="#fff" stroke-width="2.2"/></svg><div class="t" style="left:484px;top:309px;width:200px;text-align:center;line-height:18px;height:18px"><b>自定义常量数据</b></div><div class="a" style="left:807px;top:269px;width:34px;height:34px;border:1.3px solid #3a6181;border-radius:5.5px;background:#fff"></div><svg class="a" style="left:813px;top:274px" width="26" height="26" viewBox="0 0 26 26" ><path d="M4.6 16.4V4.2C4.6 2.2 5.8 1 7.6 1H19c1.2 0 2 .9 2 2s-.8 2-2 2h-1.6v8.4" fill="#eef5fb" stroke="#3a6181" stroke-width="1.3"/><path d="M10 16.4H2.8C1.7 16.4 1 17.2 1 18.3s.7 1.9 1.8 1.9H10.4" fill="#fff" stroke="#3a6181" stroke-width="1.3"/><text x="8.5" y="11.8" font-family="Liberation Sans" font-size="6.5" fill="#3a6181">JS</text><path d="M16.4 17.2l7.4 3.6-7.4 3.6z" fill="#fff" stroke="#13b013" stroke-width="1.5"/></svg><svg class="a" style="left:836px;top:261px" width="16" height="16" viewBox="0 0 16 16" ><circle cx="8" cy="8" r="8" fill="#13b013"/><path d="M4.2 8l2.6 2.6 5-5" fill="none" stroke="#fff" stroke-width="2.2"/></svg><div class="t" style="left:724px;top:309px;width:200px;text-align:center;line-height:18px;height:18px"><b>遍历</b><i style="letter-spacing:0.264px;">json </i><b>数组</b></div><div class="a" style="left:1063px;top:269px;width:34px;height:34px;border:1.3px solid #3a6181;border-radius:5.5px;background:#fff"></div><svg class="a" style="left:1065.7px;top:271.4px" width="24" height="26" viewBox="0 0 24 26" ><path d="M1 1l5.4 4.8M2 6.2h4.8V1.8" fill="none" stroke="#3a6181" stroke-width="1.4"/><path d="M6.4 24V10.8l2.8-3.6h3.2c.2-2 1-3 2.6-3s2.4 1 2.6 2.6h2c1 0 1.6.6 1.6 1.6V24z" fill="#eef5fb" stroke="#3a6181" stroke-width="1.3" stroke-linejoin="round"/><path d="M9.4 9.2h7M8.6 12.2h8M8.6 15.2h8M8.6 18.2h8M9.4 21h7" stroke="#54768f" stroke-width="1.7" stroke-dasharray="1.2 .9"/></svg><svg class="a" style="left:1092px;top:261px" width="16" height="16" viewBox="0 0 16 16" ><circle cx="8" cy="8" r="8" fill="#13b013"/><path d="M4.2 8l2.6 2.6 5-5" fill="none" stroke="#fff" stroke-width="2.2"/></svg><div class="t" style="left:980px;top:309px;width:200px;text-align:center;line-height:18px;height:18px"><b>写日志</b></div><div class="t bold" style="left:360px;top:419px;line-height:22px;height:22px;font-size:14.8px"><b>执行结果</b></div><svg class="a" style="left:1860px;top:420px" width="16" height="16" viewBox="0 0 16 16" ><path d="M6 1H1v14h14v-5" fill="none" stroke="#3a6181" stroke-width="2"/><path d="M7.4 8.6L14.6 1.4M9.6 1h5.4v5.4" fill="none" stroke="#3a6181" stroke-width="1.6"/></svg><svg class="a" style="left:1881px;top:421px" width="14" height="14" viewBox="0 0 14 14" ><path d="M1 1l12 12M13 1L1 13" stroke="#3a6181" stroke-width="2.2"/></svg><div class="a" style="left:361px;top:443px;width:7px;height:7px;background:#fff"></div><div class="a" style="left:1889px;top:443px;width:7px;height:7px;background:#fff"></div><svg class="a" style="left:361px;top:443px" width="1535" height="22" viewBox="0 0 1535 22" ><path d="M.5 22V6.5Q.5 .5 6.5 .5H1528.5Q1534.5 .5 1534.5 6.5V22z" fill="#fff" stroke="none"/><path d="M.5 22V6.5Q.5 .5 6.5 .5H1528.5Q1534.5 .5 1534.5 6.5V22" fill="none" stroke="#a0a0a0"/><path d="M40.5 .5C49.3 .5 62.7 21.5 72.6 21.5H1534.5 M139.5 21.5V7Q139.5 .5 133.5 .5 M215.5 21.5V7Q215.5 .5 209.5 .5 M279.5 21.5V7Q279.5 .5 273.5 .5 M350.5 21.5V7Q350.5 .5 344.5 .5 M452.5 21.5V7Q452.5 .5 446.5 .5 " fill="none" stroke="#a0a0a0"/></svg><div class="a" style="left:361px;top:465px;width:1535px;height:548px;border:1px solid #a0a0a0;border-top:0"></div><svg class="a" style="left:366px;top:446px" width="12" height="16" viewBox="0 0 12 16" ><rect x=".8" y="2.6" width="10.4" height="12.6" fill="#fff" stroke="#3a6181" stroke-width="1.5"/><path d="M2.6 0v3M4.6 0v3M6.6 0v3M8.6 0v3" stroke="#3a6181" stroke-width="1"/><path d="M3 6.8h6M3 9.4h6M3 12h6" stroke="#3a6181" stroke-width="1.2"/></svg><div class="t " style="left:385px;top:446px;line-height:18px;height:18px;"><b>日志</b></div><svg class="a" style="left:429px;top:445.5px" width="15" height="16" viewBox="0 0 15 16" ><circle cx="7.5" cy="8" r="6.5" fill="#fff" stroke="#3a6181" stroke-width="1.9"/><path d="M8.3 4.4v4.6H5" fill="none" stroke="#3a6181" stroke-width="1.9"/></svg><div class="t " style="left:449px;top:446px;line-height:18px;height:18px;"><b>执行历史</b></div><svg class="a" style="left:504.5px;top:446px" width="17" height="16" viewBox="0 0 17 16" ><text x="0" y="6" font-family="Liberation Sans" font-size="8" font-weight="bold" fill="#3a6181">1</text><text x="0" y="16" font-family="Liberation Sans" font-size="8" font-weight="bold" fill="#3a6181">2</text><path d="M5.4 1h11M5.4 4.8h7M5.4 11.2h11M5.4 15h7" stroke="#3a6181" stroke-width="1.4"/></svg><div class="t " style="left:525.4px;top:446px;line-height:18px;height:18px;"><b>步骤度量</b></div><svg class="a" style="left:581px;top:446px" width="16" height="16" viewBox="0 0 16 16" ><path d="M1 0v15h15" fill="none" stroke="#3a6181" stroke-width="1.8"/><path d="M4.4 10.4l3.8-4 2.2 2.2 4.2-4.4" fill="none" stroke="#3a6181" stroke-width="1.6"/><path d="M11.4 3.4h3.8v3.8" fill="none" stroke="#3a6181" stroke-width="1.4"/></svg><div class="t " style="left:601.5px;top:446px;line-height:18px;height:18px;"><b>性能图</b></div><svg class="a" style="left:645px;top:446px" width="16" height="16" viewBox="0 0 16 16" ><path d="M1 0v15h15" fill="none" stroke="#3a6181" stroke-width="1.8"/><path d="M3.6 2h5M6.4 5.4h7.6M8.6 8.8h4M6.4 12h7.6" stroke="#3a6181" stroke-width="1.9"/></svg><div class="t " style="left:665.9px;top:446px;line-height:18px;height:18px;"><i style="letter-spacing:0.239px;">Metrics</i></div><svg class="a" style="left:715.7px;top:448px" width="16" height="12" viewBox="0 0 16.5 12" ><path d="M.8 6C3 2.4 5.6 1 8.2 1s5.2 1.4 7.4 5c-2.2 3.6-4.8 5-7.4 5S3 9.6.8 6z" fill="#fff" stroke="#3a6181" stroke-width="1.8"/><ellipse cx="8.2" cy="6" rx="3.3" ry="3.9" fill="#3a6181"/></svg><div class="t " style="left:736.7px;top:446px;line-height:18px;height:18px;"><i style="letter-spacing:0.097px;">Preview data</i></div><div class="a" style="left:363px;top:467px;width:1530px;height:22px;background:#f0f0f0"></div><svg class="a" style="left:366px;top:470px" width="16" height="16" viewBox="0 0 16 16" ><circle cx="8" cy="8" r="6.9" fill="#f0f0f0" stroke="#3a6181" stroke-width="1.7"/><path d="M4.2 8h7.6" stroke="#3a6181" stroke-width="2"/></svg><svg class="a" style="left:390.5px;top:470px" width="13" height="16" viewBox="0 0 13 16" ><path d="M0 3.2h13M4.4 3V1h4.2v2" fill="none" stroke="#3a6181" stroke-width="1.6"/><path d="M1.4 4.4l1 11.2h8.2l1-11.2z" fill="#f0f0f0" stroke="#3a6181" stroke-width="1.3"/><path d="M4.4 5.4l.4 9.4M6.5 5.4v9.4M8.6 5.4l-.4 9.4" stroke="#3a6181" stroke-width="1.2"/></svg><svg class="a" style="left:420px;top:470px" width="16" height="16" viewBox="0 0 16 16" ><circle cx="8" cy="8" r="4.9" fill="#f0f0f0" stroke="#3a6181" stroke-width="2.7"/><circle cx="8" cy="8" r="6.9" fill="none" stroke="#3a6181" stroke-width="2" stroke-dasharray="2.4 3.02" stroke-dashoffset="1.2"/></svg><div class="a" style="left:1877px;top:489px;width:16px;height:521px;background:#f0f0f0"></div><div class="a" style="left:363px;top:994px;width:1530px;height:16px;background:#f0f0f0"></div><div class="a" style="left:1877px;top:506px;width:15px;height:398px;background:#cdcdcd"></div><svg class="a" style="left:1881px;top:495px" width="8" height="6" viewBox="0 0 8 6" ><path d="M.6 5L4 1.5 7.4 5" fill="none" stroke="#505050" stroke-width="1.8"/></svg><svg class="a" style="left:1881px;top:982px" width="8" height="6" viewBox="0 0 8 6" ><path d="M.6 1L4 4.5 7.4 1" fill="none" stroke="#505050" stroke-width="1.8"/></svg><svg class="a" style="left:368.5px;top:998px" width="6" height="8" viewBox="0 0 6 8" ><path d="M5 .6L1.5 4 5 7.4" fill="none" stroke="#b6b6b6" stroke-width="1.8"/></svg><svg class="a" style="left:1865px;top:998px" width="6" height="8" viewBox="0 0 6 8" ><path d="M1 .6L4.5 4 1 7.4" fill="none" stroke="#b6b6b6" stroke-width="1.8"/></svg><div class="a" style="left:0;top:489px;width:1877px;height:505px;overflow:hidden"><div class="ll" style="top:1px"><span style="color:#0000ff"><i style="letter-spacing:0.201px;">2023/04/10 09:47:33</i></span><s>-</s><i style="letter-spacing:0.326px;">Spoon</i><s>-</s><i style="letter-spacing:0.326px;">Running transformation using the Kettle execution engine</i></div><div class="ll" style="top:18px"><span style="color:#0000ff"><i style="letter-spacing:0.201px;">2023/04/10 09:47:33</i></span><s>-</s><i style="letter-spacing:0.224px;">Spoon</i><s>-</s><b>转换已经打开</b><i style="letter-spacing:0.224px;">.</i></div><div class="ll" style="top:35px"><span style="color:#0000ff"><i style="letter-spacing:0.201px;">2023/04/10 09:47:33</i></span><s>-</s><i style="letter-spacing:0.235px;">Spoon</i><s>-</s><b>正在打开转换</b><i style="letter-spacing:0.235px;"> [javascript </i><b>解析</b><i style="letter-spacing:0.235px;">json </i><b>数据</b><i style="letter-spacing:0.235px;">]...</i></div><div class="ll" style="top:52px"><span style="color:#0000ff"><i style="letter-spacing:0.201px;">2023/04/10 09:47:33</i></span><s>-</s><i style="letter-spacing:0.224px;">Spoon</i><s>-</s><b>开始执行转换</b><i style="letter-spacing:0.224px;">.</i></div><div class="ll" style="top:69px"><span style="color:#0000ff"><i style="letter-spacing:0.201px;">2023/04/10 09:47:33</i></span><s>-</s><i style="letter-spacing:0.301px;">javascript </i><b>解析</b><i style="letter-spacing:0.301px;">json </i><b>数据</b><s>-</s><b>为了转换解除补丁开始</b><i style="letter-spacing:0.301px;">  [javascript </i><b>解析</b><i style="letter-spacing:0.301px;">json </i><b>数据</b><i style="letter-spacing:0.301px;">]</i></div><div class="ll" style="top:86px"><span style="color:#0000ff"><i style="letter-spacing:0.201px;">2023/04/10 09:47:33</i></span><s>-</s><b>自定义常量数据</b><i style="letter-spacing:0.308px;">.0</i><s>-</s><b>完成处理</b><i style="letter-spacing:0.308px;"> (I=0, O=0, R=0, W=2, U=0, E=0)</i></div><div class="ll" style="top:103px"><span style="color:#0000ff"><i style="letter-spacing:0.201px;">2023/04/10 09:47:33</i></span><s>-</s><b>遍历</b><i style="letter-spacing:0.305px;">json </i><b>数组</b><i style="letter-spacing:0.305px;">.0</i><s>-</s><i style="letter-spacing:0.305px;">Optimization level set to 9.</i></div><div class="ll" style="top:120px"><span style="color:#0000ff"><i style="letter-spacing:0.201px;">2023/04/10 09:47:33</i></span><s>-</s><b>写日志</b><i style="letter-spacing:-0.459px;">.0</i><s>-</s></div><div class="ll" style="top:137px"><span style="color:#000"><i style="letter-spacing:0.201px;">2023/04/10 09:47:33</i></span><s>-</s><b>写日志</b><i style="letter-spacing:-0.459px;">.0</i><s>-</s><i style="letter-spacing:0.849px;">------------&gt; </i><b>行号</b><i style="letter-spacing:0.849px;"> 1------------------------------</i></div><div class="ll" style="top:154px"><span style="color:#000"><i style="letter-spacing:0.201px;">2023/04/10 09:47:33</i></span><s>-</s><b>写日志</b><i style="letter-spacing:-0.459px;">.0</i><s>-</s><i style="letter-spacing:0.459px;">NAME = a</i></div><div class="ll" style="top:171px"><span style="color:#000"><i style="letter-spacing:0.201px;">2023/04/10 09:47:33</i></span><s>-</s><b>写日志</b><i style="letter-spacing:-0.459px;">.0</i><s>-</s><i style="letter-spacing:0.043px;">AGE = 11</i></div><div class="ll" style="top:188px"><span style="color:#000"><i style="letter-spacing:0.201px;">2023/04/10 09:47:33</i></span><s>-</s><b>写日志</b><i style="letter-spacing:-0.459px;">.0</i><s>-</s></div><div class="ll" style="top:205px"><span style="color:#000"><i style="letter-spacing:0.201px;">2023/04/10 09:47:33</i></span><s>-</s><b>写日志</b><i style="letter-spacing:-0.459px;">.0</i><s>-</s><i style="letter-spacing:1.704px;">====================</i></div><div class="ll" style="top:222px"><span style="color:#0000ff"><i style="letter-spacing:0.201px;">2023/04/10 09:47:33</i></span><s>-</s><b>写日志</b><i style="letter-spacing:-0.459px;">.0</i><s>-</s></div><div class="ll" style="top:239px"><span style="color:#000"><i style="letter-spacing:0.201px;">2023/04/10 09:47:33</i></span><s>-</s><b>写日志</b><i style="letter-spacing:-0.459px;">.0</i><s>-</s><i style="letter-spacing:0.849px;">------------&gt; </i><b>行号</b><i style="letter-spacing:0.849px;"> 2------------------------------</i></div><div class="ll" style="top:256px"><span style="color:#000"><i style="letter-spacing:0.201px;">2023/04/10 09:47:33</i></span><s>-</s><b>写日志</b><i style="letter-spacing:-0.459px;">.0</i><s>-</s><i style="letter-spacing:0.459px;">NAME = b</i></div><div class="ll" style="top:273px"><span style="color:#000"><i style="letter-spacing:0.201px;">2023/04/10 09:47:33</i></span><s>-</s><b>写日志</b><i style="letter-spacing:-0.459px;">.0</i><s>-</s><i style="letter-spacing:0.043px;">AGE = 22</i></div><div class="ll" style="top:290px"><span style="color:#000"><i style="letter-spacing:0.201px;">2023/04/10 09:47:33</i></span><s>-</s><b>写日志</b><i style="letter-spacing:-0.459px;">.0</i><s>-</s></div><div class="ll" style="top:307px"><span style="color:#000"><i style="letter-spacing:0.201px;">2023/04/10 09:47:33</i></span><s>-</s><b>写日志</b><i style="letter-spacing:-0.459px;">.0</i><s>-</s><i style="letter-spacing:1.704px;">====================</i></div><div class="ll" style="top:324px"><span style="color:#0000ff"><i style="letter-spacing:0.201px;">2023/04/10 09:47:33</i></span><s>-</s><b>写日志</b><i style="letter-spacing:-0.459px;">.0</i><s>-</s></div><div class="ll" style="top:341px"><span style="color:#000"><i style="letter-spacing:0.201px;">2023/04/10 09:47:33</i></span><s>-</s><b>写日志</b><i style="letter-spacing:-0.459px;">.0</i><s>-</s><i style="letter-spacing:0.849px;">------------&gt; </i><b>行号</b><i style="letter-spacing:0.849px;"> 3------------------------------</i></div><div class="ll" style="top:358px"><span style="color:#000"><i style="letter-spacing:0.201px;">2023/04/10 09:47:33</i></span><s>-</s><b>写日志</b><i style="letter-spacing:-0.459px;">.0</i><s>-</s><i style="letter-spacing:0.459px;">NAME = c</i></div><div class="ll" style="top:375px"><span style="color:#000"><i style="letter-spacing:0.201px;">2023/04/10 09:47:33</i></span><s>-</s><b>写日志</b><i style="letter-spacing:-0.459px;">.0</i><s>-</s><i style="letter-spacing:0.043px;">AGE = 33</i></div><div class="ll" style="top:392px"><span style="color:#000"><i style="letter-spacing:0.201px;">2023/04/10 09:47:33</i></span><s>-</s><b>写日志</b><i style="letter-spacing:-0.459px;">.0</i><s>-</s></div><div class="ll" style="top:409px"><span style="color:#000"><i style="letter-spacing:0.201px;">2023/04/10 09:47:33</i></span><s>-</s><b>写日志</b><i style="letter-spacing:-0.459px;">.0</i><s>-</s><i style="letter-spacing:1.704px;">====================</i></div><div class="ll" style="top:426px"><span style="color:#0000ff"><i style="letter-spacing:0.201px;">2023/04/10 09:47:33</i></span><s>-</s><b>写日志</b><i style="letter-spacing:-0.459px;">.0</i><s>-</s></div><div class="ll" style="top:443px"><span style="color:#000"><i style="letter-spacing:0.201px;">2023/04/10 09:47:33</i></span><s>-</s><b>写日志</b><i style="letter-spacing:-0.459px;">.0</i><s>-</s><i style="letter-spacing:0.849px;">------------&gt; </i><b>行号</b><i style="letter-spacing:0.849px;"> 4------------------------------</i></div><div class="ll" style="top:460px"><span style="color:#000"><i style="letter-spacing:0.201px;">2023/04/10 09:47:33</i></span><s>-</s><b>写日志</b><i style="letter-spacing:-0.459px;">.0</i><s>-</s><i style="letter-spacing:0.459px;">NAME = d</i></div><div class="ll" style="top:477px"><span style="color:#000"><i style="letter-spacing:0.201px;">2023/04/10 09:47:33</i></span><s>-</s><b>写日志</b><i style="letter-spacing:-0.459px;">.0</i><s>-</s><i style="letter-spacing:0.043px;">AGE = 44</i></div><div class="ll" style="top:494px"><span style="color:#000"><i style="letter-spacing:0.201px;">2023/04/10 09:47:33</i></span><s>-</s><b>写日志</b><i style="letter-spacing:-0.459px;">.0</i><s>-</s></div></div><div class="a" style="left:1736px;top:789px;width:163px;height:26px;background:#fff;border:1px solid #a9c9ee;border-radius:3px"></div><svg class="a" style="left:1719px;top:783px" width="36" height="34" viewBox="0 0 34 32" ><defs><linearGradient id="sg" x1="0" y1="0" x2="0" y2="1"><stop offset="0" stop-color="#f4702d"/><stop offset="1" stop-color="#e9380e"/></linearGradient></defs><rect x="4.5" y="4" width="25" height="24.5" rx="4" fill="url(#sg)" transform="rotate(-14 17 16)"/><path d="M24.5 9.6C19 8.2 9.5 10 8.5 13.6c-.9 3.4 14.2 1.6 15.2 5.2 1 3.4-9.7 5.6-14.7 4.2" fill="none" stroke="#fff" stroke-width="3.2" stroke-linecap="round" transform="rotate(-6 17 16)"/></svg><div class="t" style="left:1758.5px;top:793px;line-height:18px;height:18px;font-size:14.5px;font-weight:bold;color:#0a6cdc;-webkit-text-stroke:.45px #0a6cdc"><b style="font-weight:bold">英</b></div><svg class="a" style="left:1784px;top:796px" width="12" height="14" viewBox="0 0 12 14" ><circle cx="2.8" cy="3.2" r="1.7" fill="#0a6cdc"/><path d="M8.6 5.8h2.6c.2 2.6-.6 4.8-2.8 6.4l-1-.9c1.2-1 1.6-2 1.5-3.1h-.3z" fill="#0a6cdc"/></svg><svg class="a" style="left:1807.5px;top:794px" width="13" height="17" viewBox="0 0 13 17" ><rect x="3.7" y=".3" width="5.6" height="10" rx="2.8" fill="#0a6cdc"/><path d="M1 6.8c0 3.6 2.2 5.6 5.5 5.6s5.5-2 5.5-5.6" fill="none" stroke="#0a6cdc" stroke-width="1.3"/><path d="M6.5 12.4v2.4M4 15.4h5" stroke="#0a6cdc" stroke-width="1.5"/></svg><svg class="a" style="left:1830.5px;top:795.5px" width="16" height="13" viewBox="0 0 16 13" ><rect x=".8" y=".8" width="14.4" height="11.4" rx="1.8" fill="#fff" stroke="#0a6cdc" stroke-width="1.6"/><path d="M3 4h10.4M3 6.6h10.4" stroke="#0a6cdc" stroke-width="1.5" stroke-dasharray="2 1"/><path d="M3 9.4h10" stroke="#0a6cdc" stroke-width="1.5" stroke-dasharray="2 1 4.4 1 2 1"/></svg><svg class="a" style="left:1854.5px;top:795px" width="16" height="14" viewBox="0 0 16 14" ><path d="M5.2 .4c.8 1.2 4.8 1.2 5.6 0l4.8 2-1.4 3.8-2-.6v8H3.8v-8l-2 .6L.4 2.4z" fill="#0a6cdc"/></svg><svg class="a" style="left:1879.5px;top:795.5px" width="14" height="14" viewBox="0 0 14 14" ><g fill="#0a6cdc"><rect x="0" y="0" width="6" height="6" rx="1.4"/><rect x="7.6" y="0" width="6" height="6" rx="1.4"/><rect x="0" y="7.6" width="6" height="6" rx="1.4"/><rect x="7.6" y="7.6" width="6" height="6" rx="1.4"/></g><circle cx="10.6" cy="3" r="1.2" fill="#fff"/></svg></body></html>
